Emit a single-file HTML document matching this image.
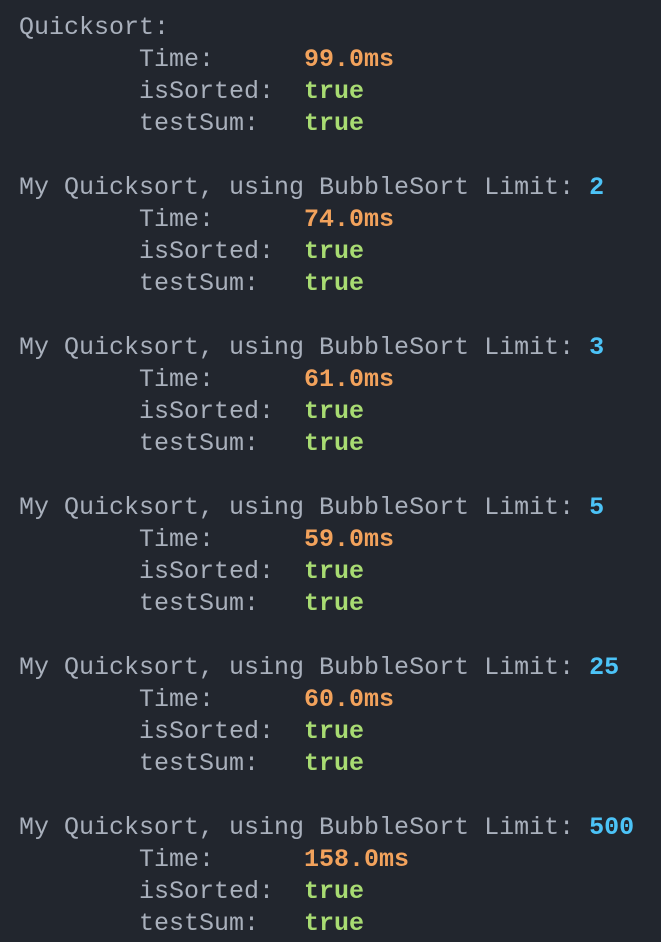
<!DOCTYPE html>
<html><head><meta charset="utf-8"><style>
html,body{margin:0;padding:0;background:#22262e;width:661px;height:942px;overflow:hidden}
pre{margin:0;padding:12px 0 0 19px;font-family:"Liberation Mono","DejaVu Sans Mono",monospace;font-size:25px;line-height:32px;color:#a9b0bc}
.o{color:#f2a25c;font-weight:bold}.g{color:#a8db72;font-weight:bold}.b{color:#4cc3f7;font-weight:bold}
</style></head><body><pre>Quicksort:
        Time:      <span class="o">99.0ms</span>
        isSorted:  <span class="g">true</span>
        testSum:   <span class="g">true</span>

My Quicksort, using BubbleSort Limit: <span class="b">2</span>
        Time:      <span class="o">74.0ms</span>
        isSorted:  <span class="g">true</span>
        testSum:   <span class="g">true</span>

My Quicksort, using BubbleSort Limit: <span class="b">3</span>
        Time:      <span class="o">61.0ms</span>
        isSorted:  <span class="g">true</span>
        testSum:   <span class="g">true</span>

My Quicksort, using BubbleSort Limit: <span class="b">5</span>
        Time:      <span class="o">59.0ms</span>
        isSorted:  <span class="g">true</span>
        testSum:   <span class="g">true</span>

My Quicksort, using BubbleSort Limit: <span class="b">25</span>
        Time:      <span class="o">60.0ms</span>
        isSorted:  <span class="g">true</span>
        testSum:   <span class="g">true</span>

My Quicksort, using BubbleSort Limit: <span class="b">500</span>
        Time:      <span class="o">158.0ms</span>
        isSorted:  <span class="g">true</span>
        testSum:   <span class="g">true</span>
</pre></body></html>
